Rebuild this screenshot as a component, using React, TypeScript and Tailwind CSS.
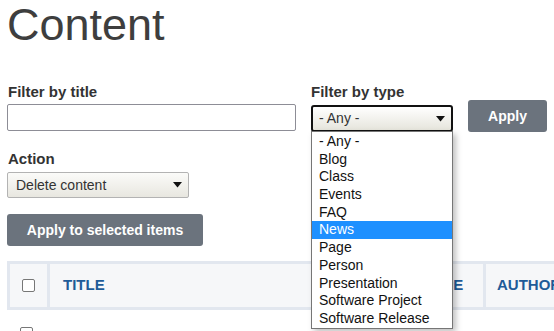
import React from "react";

const Arrow = ({ className }: { className?: string }) => (
  <svg width="9" height="6" viewBox="0 0 9 6" className={className}>
    <path d="M0 0 L9 0 L4.5 5.5 Z" fill="#111" />
  </svg>
);

const items = [
  "- Any -",
  "Blog",
  "Class",
  "Events",
  "FAQ",
  "News",
  "Page",
  "Person",
  "Presentation",
  "Software Project",
  "Software Release",
];

export default function App() {
  return (
    <div
      className="relative w-[554px] h-[331px] overflow-hidden bg-white pl-[7px] text-[#333]"
      style={{ fontFamily: '"Liberation Sans", Arial, sans-serif' }}
    >
      <h1 className="h-[52px] text-[45px] leading-[50px] text-[#3e3e3e] font-normal">Content</h1>

      {/* Filters */}
      <div className="mt-[31px] flex items-end">
        <div className="flex flex-col">
          <label className="text-[15px] leading-[18px] font-bold pl-px">Filter by title</label>
          <div className="mt-[3px] w-[289px] h-[27px] border border-[#8d8d96] rounded-[2px] bg-white mb-px" />
        </div>
        <div className="ml-[15px] flex flex-col relative">
          <label className="text-[15px] leading-[18px] font-bold">Filter by type</label>
          <div className="mt-[4px] w-[142px] h-[27px] border-2 border-[#111] rounded-[3px] bg-gradient-to-b from-white to-[#e6e5dc] flex items-center justify-between pl-[6px] pr-[6px] text-[14px]">
            <span>- Any -</span>
            <Arrow />
          </div>
        </div>
        <button className="ml-[15px] w-[79px] h-[32px] rounded-[3px] bg-[#6b737d] text-white text-[14px] font-bold">
          Apply
        </button>
      </div>

      {/* Action */}
      <div className="mt-[18px] flex flex-col">
        <label className="text-[15px] leading-[18px] font-bold pl-px">Action</label>
        <div className="mt-[4px] w-[182px] h-[26px] border border-[#b3b3b3] rounded-[2px] bg-gradient-to-b from-[#fbfbf9] to-[#e8e7e0] flex items-center justify-between pl-[8px] pr-[6px] text-[14px]">
          <span>Delete content</span>
          <Arrow />
        </div>
      </div>

      <button className="mt-[16px] w-[196px] h-[32px] rounded-[3px] bg-[#6b737d] text-white text-[14px] font-bold block">
        Apply to selected items
      </button>

      {/* Table */}
      <div className="mt-[15px] w-[640px]">
        <div className="flex gap-[3px] p-[3px] bg-[#e2e7ef] h-[49px]">
          <div className="w-[37px] bg-[#f6f7f9] flex items-center justify-center">
            <div className="w-[13px] h-[13px] border border-[#777] rounded-[2px] bg-white" />
          </div>
          <div className="w-[358px] bg-[#f6f7f9] flex items-center pl-[13px] text-[15px] font-bold text-[#1f5b98]">
            TITLE
          </div>
          <div className="w-[72px] bg-[#f6f7f9] flex items-center pl-[13px] text-[15px] font-bold text-[#1f5b98]">
            TYPE
          </div>
          <div className="flex-1 bg-[#f6f7f9] flex items-center pl-[11px] text-[15px] font-bold text-[#1f5b98]">
            AUTHOR
          </div>
        </div>
        <div className="flex h-[40px] text-[14px] leading-[20px]">
          <div className="w-[43px] pl-[13px] pt-[17px]">
            <div className="w-[13px] h-[13px] border border-[#777] rounded-[2px] bg-white" />
          </div>
          <div className="w-[361px] pl-[12px] pt-[17px] text-[#1f5b98]">About us</div>
          <div className="w-[75px] pl-[16px] pt-[17px]">Page</div>
          <div className="flex-1 pl-[13px] pt-[17px]">admin</div>
        </div>
      </div>

      {/* Dropdown list */}
      <div className="absolute left-[311px] top-[131px] w-[142px] pt-px border border-[#767676] bg-white shadow-[3px_3px_6px_rgba(0,0,0,0.25)] text-[14px] text-[#111]">
        {items.map((it) => (
          <div
            key={it}
            className={
              it === "News"
                ? "h-[17.7px] leading-[17.7px] pl-[7px] bg-[#1e90ff] text-white"
                : "h-[17.7px] leading-[17.7px] pl-[7px]"
            }
          >
            {it}
          </div>
        ))}
      </div>
    </div>
  );
}
